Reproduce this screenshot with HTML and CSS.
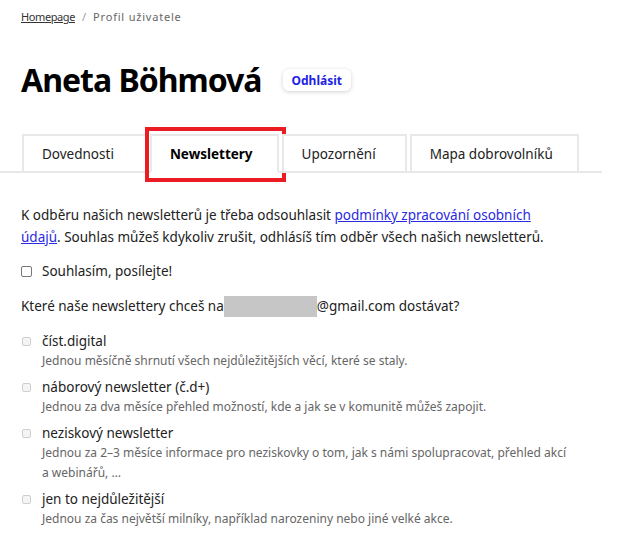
FILE: index.html
```html
<!DOCTYPE html>
<html lang="cs">
<head>
<meta charset="utf-8">
<title>Profil uživatele</title>
<link rel="stylesheet" href="styles.css">
</head>
<body>
<div class="page">
  <nav class="breadcrumb">
    <a href="#" class="crumb-link">Homepage</a>
    <span class="crumb-sep">/</span>
    <span class="crumb-current">Profil uživatele</span>
  </nav>

  <header class="profile-head">
    <h1 class="profile-name">Aneta Böhmová</h1>
    <button class="logout-btn" type="button">Odhlásit</button>
  </header>

  <ul class="tabs">
    <li class="tab">Dovednosti</li>
    <li class="tab tab-active">Newslettery</li>
    <li class="tab tab-alerts">Upozornění</li>
    <li class="tab tab-map">Mapa dobrovolníků</li>
  </ul>

  <section class="content">
    <p class="intro">K odběru našich newsletterů je třeba odsouhlasit <a href="#" class="link">podmínky zpracování osobních údajů</a>. Souhlas můžeš kdykoliv zrušit, odhlásíš tím odběr všech našich newsletterů.</p>

    <label class="consent">
      <input type="checkbox" class="cb cb-main">
      <span>Souhlasím, posílejte!</span>
    </label>

    <p class="question">Které naše newslettery chceš na<span class="redacted"></span>@gmail.com dostávat?</p>

    <ul class="news-list">
      <li class="news-item">
        <input type="checkbox" class="cb cb-disabled" disabled>
        <div class="news-text">
          <div class="news-title">číst.digital</div>
          <div class="news-desc">Jednou měsíčně shrnutí všech nejdůležitějších věcí, které se staly.</div>
        </div>
      </li>
      <li class="news-item">
        <input type="checkbox" class="cb cb-disabled" disabled>
        <div class="news-text">
          <div class="news-title">náborový newsletter (č.d+)</div>
          <div class="news-desc">Jednou za dva měsíce přehled možností, kde a jak se v komunitě můžeš zapojit.</div>
        </div>
      </li>
      <li class="news-item">
        <input type="checkbox" class="cb cb-disabled" disabled>
        <div class="news-text">
          <div class="news-title">neziskový newsletter</div>
          <div class="news-desc">Jednou za 2–3 měsíce informace pro neziskovky o tom, jak s námi spolupracovat, přehled akcí a&nbsp;webinářů, …</div>
        </div>
      </li>
      <li class="news-item">
        <input type="checkbox" class="cb cb-disabled" disabled>
        <div class="news-text">
          <div class="news-title">jen to nejdůležitější</div>
          <div class="news-desc">Jednou za čas největší milníky, například narozeniny nebo jiné velké akce.</div>
        </div>
      </li>
    </ul>
  </section>
</div>
</body>
</html>
```

FILE: styles.css
```css
* { box-sizing: border-box; }

html, body {
  margin: 0;
  padding: 0;
  background: #ffffff;
}

body {
  font-family: "Noto Sans", "DejaVu Sans", sans-serif;
  color: #222;
  font-size: 13.5px;
}

.page {
  width: 602px;
}

.breadcrumb {
  padding: 9px 0 0 21px;
  font-size: 11px;
  line-height: 16px;
  display: flex;
  gap: 7px;
}

.crumb-link {
  color: #333;
  text-decoration: underline;
  letter-spacing: -0.4px;
}

.crumb-sep { color: #999; }

.crumb-current {
  color: #666;
  letter-spacing: 0.8px;
}

.profile-head {
  display: flex;
  align-items: center;
  gap: 21px;
  padding-left: 21px;
  margin-top: 37px;
}

.profile-name {
  margin: 0;
  font-size: 32px;
  line-height: 36px;
  font-weight: 700;
  color: #000;
  letter-spacing: -1px;
}

.logout-btn {
  font-family: inherit;
  font-size: 12px;
  font-weight: 700;
  color: #2222e6;
  background: #fff;
  border: none;
  border-radius: 6px;
  height: 22px;
  padding: 0 9px;
  box-shadow: 0 1px 4px rgba(0, 0, 0, 0.18);
}

.tabs {
  list-style: none;
  margin: 36px 0 0 0;
  padding: 0 0 0 22px;
  display: flex;
  gap: 3px;
  border-bottom: 2px solid #e8e8e8;
}

.tab {
  position: relative;
  flex: none;
  white-space: nowrap;
  height: 39px;
  margin-bottom: -2px;
  padding: 0 31px 0 18px;
  border: 2px solid #e8e8e8;
  display: flex;
  align-items: center;
  font-size: 13.5px;
  color: #222;
  background: #fff;
}

.tab-alerts {
  padding-right: 29px;
}

.tab-map {
  padding-right: 24px;
}

.tab-active {
  font-weight: 700;
  color: #000;
  padding-right: 24px;
  border-bottom-color: #fff;
}

.tab-active::after {
  content: "";
  position: absolute;
  left: -7px;
  top: -9px;
  right: -9px;
  bottom: -11px;
  border: 4px solid #ec1c24;
  pointer-events: none;
}

.content {
  padding: 31px 0 0 21px;
  width: 562px;
}

.intro {
  margin: 0;
  line-height: 22px;
}

.link {
  color: #2a2ae0;
  text-decoration: underline;
}

.consent {
  display: flex;
  align-items: center;
  gap: 10px;
  margin-top: 12px;
  line-height: 22px;
}

.cb {
  appearance: none;
  -webkit-appearance: none;
  margin: 0;
  flex: none;
  background: #fff;
}

.cb-main {
  width: 11px;
  height: 11px;
  border: 1px solid #777;
  border-radius: 2px;
}

.question {
  margin: 13px 0 0 0;
  line-height: 22px;
}

.redacted {
  display: inline-block;
  width: 93px;
  height: 21px;
  background: #c6c6c6;
  vertical-align: -6px;
}

.news-list {
  list-style: none;
  margin: 14px -18px 0 0;
  padding: 0;
  display: flex;
  flex-direction: column;
  gap: 6px;
}

.news-item {
  display: flex;
  gap: 11px;
  align-items: flex-start;
}

.cb-disabled {
  width: 9px;
  height: 9px;
  margin-top: 6px;
  margin-left: 1px;
  border: 1px solid #cfcfcf;
  border-radius: 2px;
  background: #f4f4f4;
}

.news-title {
  font-size: 13.5px;
  line-height: 20px;
  color: #222;
}

.news-desc {
  font-size: 12px;
  line-height: 20px;
  color: #666;
}
```
